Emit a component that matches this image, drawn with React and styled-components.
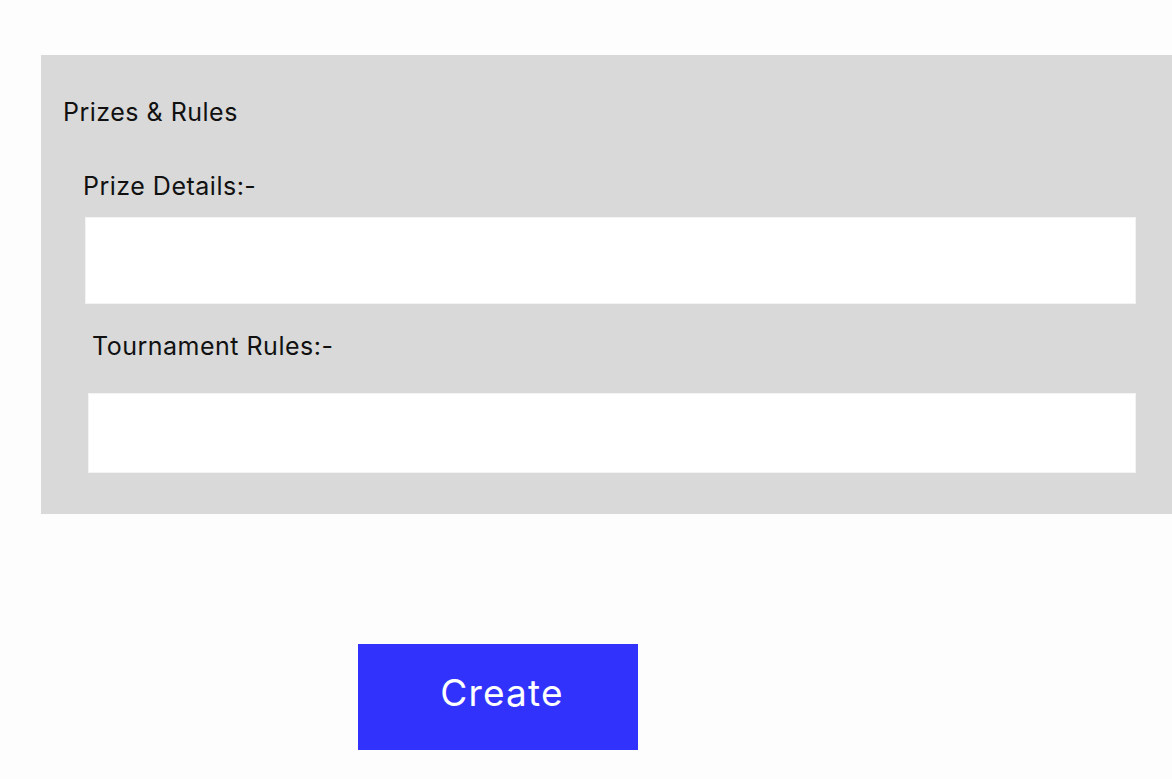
import styled, { createGlobalStyle } from 'styled-components';

const GlobalStyle = createGlobalStyle`
  body {
    margin: 0;
    background: #fdfdfd;
    font-family: Inter, "Noto Sans", sans-serif;
    color: #111;
  }
`;

const Page = styled.div`
  padding-top: 55px;
  padding-left: 41px;
  display: flex;
  flex-direction: column;
`;

const Panel = styled.section`
  background-color: #d9d9d9;
  padding: 43px 36px 41px 22px;
  display: flex;
  flex-direction: column;
`;

const Title = styled.h2`
  margin: 0;
  font-size: 25px;
  font-weight: 400;
  letter-spacing: 0.5px;
  line-height: 29px;
`;

const Label = styled.label`
  display: block;
  margin: 0;
  margin-top: ${(p) => p.$top}px;
  margin-left: ${(p) => p.$indent}px;
  font-size: 25px;
  font-weight: 400;
  letter-spacing: 0.5px;
  line-height: 29px;
`;

const Field = styled.textarea`
  display: block;
  box-sizing: border-box;
  margin-top: ${(p) => p.$top}px;
  margin-left: ${(p) => p.$indent}px;
  height: ${(p) => p.$height}px;
  width: calc(100% - ${(p) => p.$indent}px);
  background: #fff;
  border: 1px solid #f3f3f3;
  border-radius: 0;
  resize: none;
  outline: none;
  font-family: inherit;
  font-size: 18px;
`;

const Actions = styled.div`
  margin-top: 130px;
  padding-left: 317px;
  display: flex;
`;

const CreateButton = styled.button`
  width: 280px;
  height: 106px;
  background-color: #3232fd;
  color: #fff;
  border: none;
  border-radius: 0;
  font-family: Inter, "Noto Sans", sans-serif;
  font-size: 37px;
  font-weight: 400;
  letter-spacing: 1.2px;
  padding: 0 0 10px 8px;
  cursor: pointer;
`;

export default function App() {
  return (
    <>
      <GlobalStyle />
      <Page>
        <Panel>
          <Title>Prizes &amp; Rules</Title>
          <Label $top={45} $indent={20}>Prize Details:-</Label>
          <Field $top={16} $indent={22} $height={87} />
          <Label $top={28} $indent={29}>Tournament Rules:-</Label>
          <Field $top={32} $indent={25} $height={80} />
        </Panel>
        <Actions>
          <CreateButton>Create</CreateButton>
        </Actions>
      </Page>
    </>
  );
}
